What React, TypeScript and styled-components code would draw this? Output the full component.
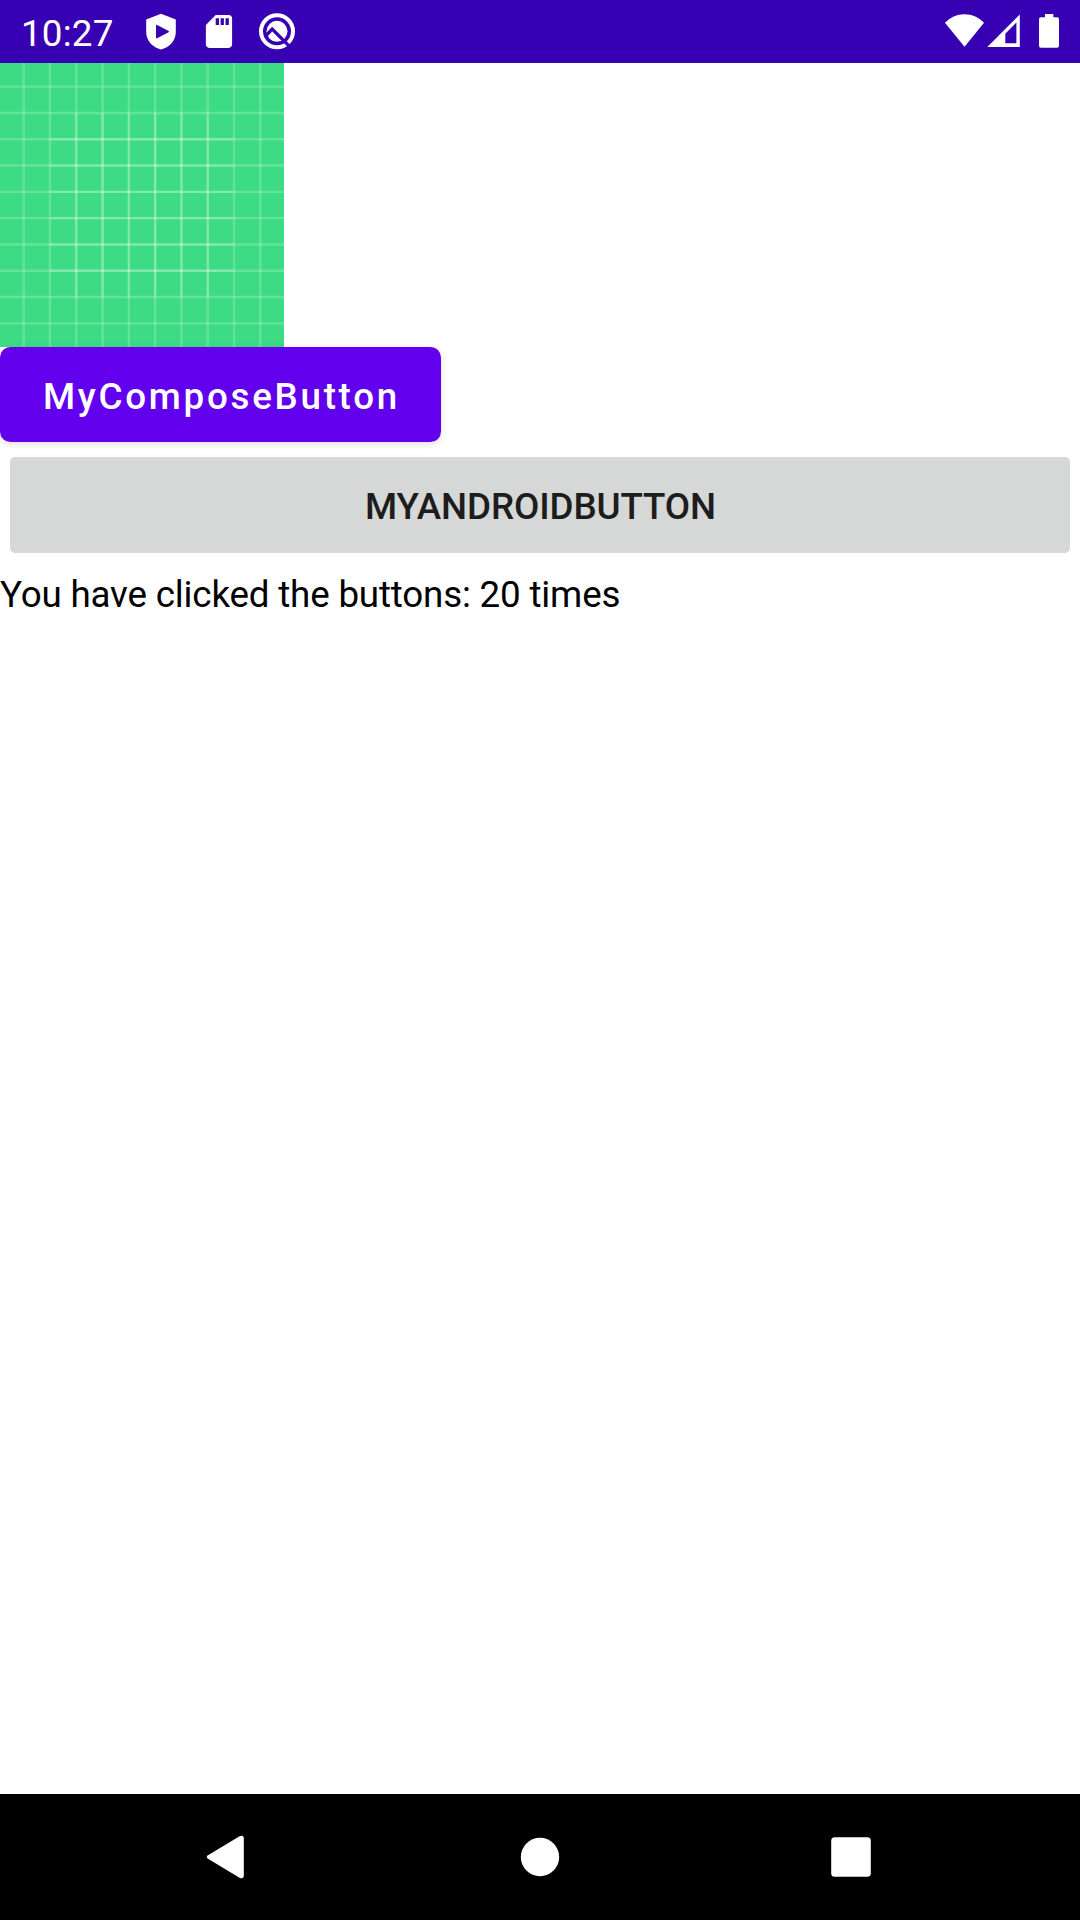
import React, { useState } from "react";
import styled, { createGlobalStyle } from "styled-components";

const GlobalStyle = createGlobalStyle`
  html, body { margin: 0; padding: 0; background: #fff; }
  body { font-family: Roboto, "Noto Sans", sans-serif; }
  * { box-sizing: border-box; }
`;

const Screen = styled.div`
  width: 1080px;
  height: 1920px;
  display: flex;
  flex-direction: column;
  background: #fff;
  overflow: hidden;
`;

const StatusBar = styled.header`
  height: 63px;
  flex: none;
  display: flex;
  align-items: center;
  justify-content: space-between;
  padding: 0 14px 0 21px;
  background: #3700b3;
  color: #fff;
`;

const StatusGroup = styled.div`
  display: flex;
  align-items: center;
  height: 63px;
`;

const Clock = styled.span`
  width: 111px;
  font-size: 36.75px;
  line-height: 43px;
  padding-top: 4px;
  letter-spacing: 0.2px;
`;

const StatusIcon = styled.svg<{ $w: number }>`
  display: block;
  flex: none;
  width: ${(p) => p.$w}px;
  height: 63px;
`;

const Content = styled.main`
  flex: 1;
  display: flex;
  flex-direction: column;
  align-items: flex-start;
`;

const GridImage = styled.svg`
  display: block;
  flex: none;
  width: 284px;
  height: 284px;
`;

const ComposeButton = styled.button`
  width: 441px;
  height: 95px;
  flex: none;
  border: 0;
  border-radius: 10.5px;
  padding: 4px 0 0 43px;
  text-align: left;
  background: #6200ee;
  color: #fff;
  font: 500 36.75px/43px Roboto, sans-serif;
  letter-spacing: 2.72px;
  box-shadow: 0 2px 7px rgba(0, 0, 0, 0.14);
`;

const AndroidButton = styled.button`
  width: 1060px;
  height: 96px;
  flex: none;
  align-self: center;
  margin-top: 15px;
  border: 0;
  border-radius: 5px;
  padding: 3px 0 0 1px;
  background: #d6d7d7;
  color: #1d1d1d;
  font: 500 36.75px/43px Roboto, sans-serif;
  letter-spacing: -0.09px;
`;

const Message = styled.p`
  margin: 20px 0 0;
  color: #000;
  font-size: 36.75px;
  line-height: 43px;
  letter-spacing: -0.18px;
  white-space: nowrap;
`;

const NavBar = styled.nav`
  height: 126px;
  flex: none;
  display: grid;
  grid-template-columns: 90px 90px 90px;
  column-gap: 224px;
  align-items: center;
  padding-left: 181px;
  background: #000;
`;

const NavIcon = styled.svg`
  display: block;
  width: 90px;
  height: 90px;
`;

const outer = [9, 19, 29, 39, 49, 59, 69, 79, 89, 99];
const inner = [29, 39, 49, 59, 69, 79];

const LauncherBackground = () => (
  <GridImage viewBox="0 0 108 108">
    <rect width="108" height="108" fill="#3ddc84" />
    <g stroke="#fff" strokeOpacity="0.2" strokeWidth="0.9">
      {outer.map((n) => (
        <path key={`v${n}`} d={`M${n} 0V108`} />
      ))}
      {outer.map((n) => (
        <path key={`h${n}`} d={`M0 ${n}H108`} />
      ))}
      {inner.map((n) => (
        <path key={`iv${n}`} d={`M${n} 19V89`} />
      ))}
      {inner.map((n) => (
        <path key={`ih${n}`} d={`M19 ${n}H89`} />
      ))}
    </g>
  </GridImage>
);

export default function App() {
  const [clicks, setClicks] = useState(20);
  const click = () => setClicks((c) => c + 1);
  return (
    <>
      <GlobalStyle />
      <Screen>
        <StatusBar>
          <StatusGroup>
            <Clock>10:27</Clock>
            <StatusIcon $w={58} viewBox="132 0 58 63">
              <path
                fill="#fff"
                d="M161 13.8L175.8 19.5V32C175.8 41 169 47.5 161 49.6C153 47.5 146.2 41 146.2 32V19.5Z"
              />
              <path
                fill="#3700b3"
                stroke="#3700b3"
                strokeWidth="1.6"
                strokeLinejoin="round"
                d="M156.8 25.6V37.6L168.2 31.6Z"
              />
            </StatusIcon>
            <StatusIcon $w={58} viewBox="190 0 58 63">
              <path
                fill="#fff"
                transform="translate(199.3 11.8) scale(1.64)"
                d="M18 2h-8L4.02 8 4 20c0 1.1.9 2 2 2h12c1.1 0 2-.9 2-2V4c0-1.1-.9-2-2-2zm-6 6h-2V4h2v4zm3 0h-2V4h2v4zm3 0h-2V4h2v4z"
              />
            </StatusIcon>
            <StatusIcon $w={58} viewBox="248 0 58 63">
              <circle cx="277" cy="31.3" r="16" fill="none" stroke="#fff" strokeWidth="4" />
              <circle cx="277" cy="31.3" r="10.5" fill="#fff" />
              <path d="M265.5 36L272.2 29L290 46.8" fill="none" stroke="#3700b3" strokeWidth="3.3" />
            </StatusIcon>
          </StatusGroup>
          <StatusGroup>
            <StatusIcon $w={44} viewBox="942 0 44 63">
              <path fill="#fff" d="M964.5 46.8L945 22.8C950 17.5 957 14.2 964.5 14.2S979 17.5 984 22.8Z" />
            </StatusIcon>
            <StatusIcon $w={40} viewBox="986 0 40 63">
              <path fill="#fff" fillRule="evenodd" d="M987.3 47H1019.8V14.5ZM1005.3 43.3V33.8L1016.4 22.6V43.3Z" />
            </StatusIcon>
            <StatusIcon $w={40} viewBox="1026 0 40 63">
              <path
                fill="#fff"
                d="M1045 14H1053.3V17.3H1057Q1059 17.3 1059 19.3V45.7Q1059 47.7 1057 47.7H1041Q1039 47.7 1039 45.7V19.3Q1039 17.3 1041 17.3H1045Z"
              />
            </StatusIcon>
          </StatusGroup>
        </StatusBar>
        <Content>
          <LauncherBackground />
          <ComposeButton onClick={click}>MyComposeButton</ComposeButton>
          <AndroidButton onClick={click}>MYANDROIDBUTTON</AndroidButton>
          <Message>You have clicked the buttons: {clicks} times</Message>
        </Content>
        <NavBar>
          <NavIcon viewBox="181 1812 90 90">
            <path
              fill="#fff"
              d="M208 1855.2L239.5 1836.3Q243.8 1834.5 243.8 1838.5V1875.5Q243.8 1879.5 239.5 1877.7L208 1858.8Q205.5 1857 208 1855.2Z"
            />
          </NavIcon>
          <NavIcon viewBox="495 1812 90 90">
            <circle cx="540" cy="1857" r="19.2" fill="#fff" />
          </NavIcon>
          <NavIcon viewBox="809 1812 90 90">
            <rect x="831.2" y="1837.2" width="39.6" height="39.6" rx="3.5" fill="#fff" />
          </NavIcon>
        </NavBar>
      </Screen>
    </>
  );
}
